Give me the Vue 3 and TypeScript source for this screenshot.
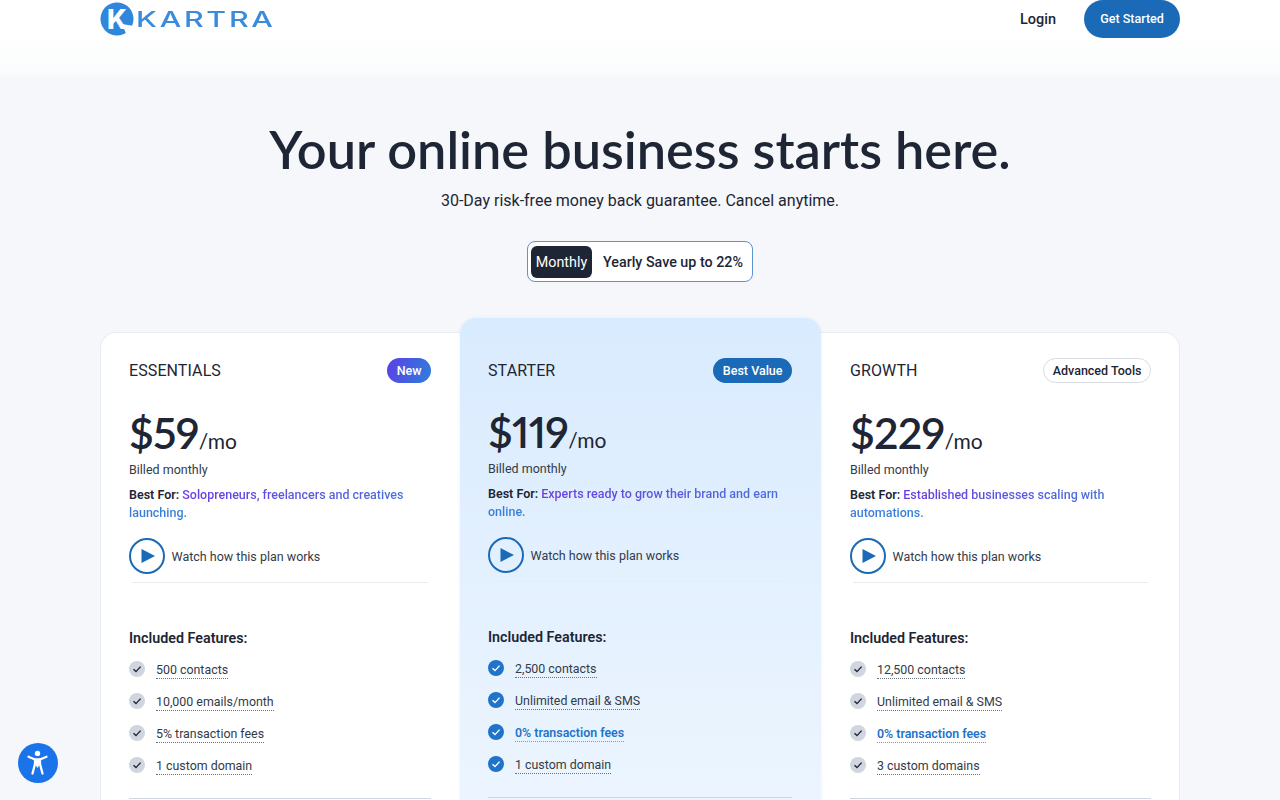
<script setup lang="ts">
interface Feature {
  label: string
  highlight?: boolean
}

interface Plan {
  name: string
  badge: string
  badgeClass: string
  price: string
  bestFor: [string, string]
  featured?: boolean
  features: Feature[]
}

const plans: Plan[] = [
  {
    name: 'ESSENTIALS',
    badge: 'New',
    badgeClass: 'badge-new',
    price: '$59',
    bestFor: ['Solopreneurs, freelancers and creatives', 'launching.'],
    features: [
      { label: '500 contacts' },
      { label: '10,000 emails/month' },
      { label: '5% transaction fees' },
      { label: '1 custom domain' }
    ]
  },
  {
    name: 'STARTER',
    badge: 'Best Value',
    badgeClass: 'badge-best',
    price: '$119',
    bestFor: ['Experts ready to grow their brand and earn', 'online.'],
    featured: true,
    features: [
      { label: '2,500 contacts' },
      { label: 'Unlimited email & SMS' },
      { label: '0% transaction fees', highlight: true },
      { label: '1 custom domain' }
    ]
  },
  {
    name: 'GROWTH',
    badge: 'Advanced Tools',
    badgeClass: 'badge-tools',
    price: '$229',
    bestFor: ['Established businesses scaling with', 'automations.'],
    features: [
      { label: '12,500 contacts' },
      { label: 'Unlimited email & SMS' },
      { label: '0% transaction fees', highlight: true },
      { label: '3 custom domains' }
    ]
  }
]
</script>

<template>
  <div class="page">
    <header class="header">
      <div class="header-inner">
        <div class="logo">
          <svg class="logo-mark" width="34" height="34" viewBox="0 0 34 34">
            <circle cx="17" cy="17" r="16.5" fill="#2f86dc" />
            <text x="7" y="27" font-family="Inter, sans-serif" font-weight="800" font-size="27" fill="#fff">K</text>
            <polygon points="22,22 34,24 30,34 27,34" fill="#fff" />
          </svg>
          <span class="logo-text">KARTRA</span>
        </div>
        <nav class="nav">
          <a class="login">Login</a>
          <a class="get-started">Get Started</a>
        </nav>
      </div>
    </header>

    <section class="hero">
      <h1>Your online business starts here.</h1>
      <p class="sub">30-Day risk-free money back guarantee. Cancel anytime.</p>
      <div class="toggle">
        <span class="toggle-on">Monthly</span>
        <span class="toggle-off">Yearly Save up to 22%</span>
      </div>
    </section>

    <section class="plans">
      <article v-for="plan in plans" :key="plan.name" class="card" :class="{ featured: plan.featured }">
        <div class="card-top">
          <h2>{{ plan.name }}</h2>
          <span class="badge" :class="plan.badgeClass">{{ plan.badge }}</span>
        </div>
        <div class="price">
          <span class="amount">{{ plan.price }}</span><span class="per">/mo</span>
        </div>
        <p class="billed">Billed monthly</p>
        <p class="best-for">
          <strong>Best For: </strong><span class="grad line-one">{{ plan.bestFor[0] }}</span><br />
          <span class="grad line-two">{{ plan.bestFor[1] }}</span>
        </p>
        <div class="watch">
          <span class="play">
            <svg width="16" height="16" viewBox="0 0 16 16"><polygon points="1.5,1 15,8 1.5,15" fill="#1b6ab8" /></svg>
          </span>
          <span>Watch how this plan works</span>
        </div>
        <div class="divider"></div>
        <h3>Included Features:</h3>
        <ul class="features">
          <li v-for="f in plan.features" :key="f.label">
            <span class="check">
              <svg width="10" height="10" viewBox="0 0 10 10">
                <path d="M1.5 5.3 L4 7.6 L8.6 2.6" fill="none" stroke="currentColor" stroke-width="1.4" />
              </svg>
            </span>
            <span class="feature-label" :class="{ hl: f.highlight }">{{ f.label }}</span>
          </li>
        </ul>
        <div class="rule"></div>
      </article>
    </section>

    <button class="a11y" aria-label="Accessibility">
      <svg width="26" height="26" viewBox="0 0 26 26">
        <circle cx="12.5" cy="3.4" r="2.7" fill="#fff" />
        <path d="M3.5 6.8 L10 9.5 H15 L21.5 6.8 M10 9.5 V14 L7.5 23.5 M15 9.5 V14 L17.5 23.5" fill="none" stroke="#fff" stroke-width="2.3" stroke-linecap="round" stroke-linejoin="round" />
        <path d="M10 9.5 H15 V14 L12.5 18 L10 14 Z" fill="#fff" />
      </svg>
    </button>
  </div>
</template>

<style scoped>
.page {
  height: 800px;
  overflow: hidden;
  background: #f5f7fa;
  color: #1e2535;
  font-family: Roboto, "Liberation Sans", sans-serif;
}

.header {
  height: 80px;
  background: linear-gradient(#fff 40%, #fbfcfd 88%, #f5f7fa 100%);
}

.header-inner {
  width: 1080px;
  margin: 0 auto;
  display: flex;
  justify-content: space-between;
  align-items: flex-start;
}

.logo {
  display: flex;
  align-items: center;
  gap: 2px;
  margin-top: 2px;
}

.logo-text {
  display: inline-block;
  font-family: Inter, sans-serif;
  font-size: 22px;
  font-weight: 500;
  letter-spacing: 2px;
  color: #3a8bdc;
  line-height: 34px;
  transform: scaleX(1.38);
  transform-origin: left center;
}

.nav {
  display: flex;
  align-items: center;
  gap: 28px;
}

.login {
  font-size: 14.5px;
  font-weight: 500;
}

.get-started {
  width: 96px;
  height: 38px;
  padding-bottom: 1px;
  box-sizing: border-box;
  display: flex;
  align-items: center;
  justify-content: center;
  border-radius: 19px;
  background: #1b6ab8;
  color: #fff;
  font-size: 12.5px;
  font-weight: 500;
}

.hero {
  text-align: center;
  padding-top: 36px;
}

h1 {
  margin: 0;
  font-family: Lato, sans-serif;
  font-size: 52.3px;
  line-height: 66px;
  font-weight: 600;
}

.sub {
  margin: 7px 0 0;
  font-size: 16px;
  line-height: 24px;
}

.toggle {
  width: 226px;
  height: 41px;
  box-sizing: border-box;
  margin: 28px auto 0;
  padding: 3px;
  display: flex;
  align-items: center;
  background: #fff;
  border: 1px solid #5b93d6;
  border-radius: 8px;
  font-size: 14.3px;
  font-weight: 500;
}

.toggle-on {
  width: 61px;
  height: 32px;
  display: flex;
  align-items: center;
  justify-content: center;
  background: #1e2535;
  color: #fff;
  border-radius: 6px;
  font-weight: 400;
}

.toggle-off {
  margin-left: 11px;
  white-space: nowrap;
}

.plans {
  width: 1080px;
  margin: 50px auto 0;
  display: grid;
  grid-template-columns: 360px 361px 359px;
  align-items: start;
}

.card {
  box-sizing: border-box;
  height: 520px;
  padding: 25px 29px 0 28px;
  background: #fff;
  border: 1px solid #e8ebef;
  border-radius: 16px 0 0 0;
}

.card:last-child {
  border-radius: 0 16px 0 0;
  border-left: 0;
  padding-left: 29px;
  padding-right: 28px;
}

.card:first-child {
  border-right: 0;
}

.card.featured {
  margin-top: -14px;
  height: 540px;
  padding-top: 40px;
  border: 0;
  border-radius: 16px 16px 0 0;
  background: linear-gradient(#d9ebfe, #eef6ff);
  box-shadow: 0 0 3px rgba(60, 110, 170, 0.1);
  position: relative;
  padding-left: 28px;
  padding-right: 29px;
}

.card-top {
  display: flex;
  justify-content: space-between;
  align-items: center;
}

h2 {
  margin: 0;
  font-size: 16px;
  font-weight: 400;
  letter-spacing: 0.1px;
}

.badge {
  height: 25px;
  display: flex;
  align-items: center;
  padding: 0 9.5px;
  box-sizing: border-box;
  border-radius: 13px;
  font-size: 12.5px;
  font-weight: 500;
}

.badge-new {
  color: #fff;
  background: linear-gradient(110deg, #5b3fe4, #2f7fdc);
}

.badge-best {
  color: #fff;
  background: #1b6ab8;
}

.badge-tools {
  padding: 0 8.5px;
  background: #fff;
  border: 1px solid #d8dce2;
}

.price {
  margin-top: 25px;
  height: 47px;
  font-family: Lato, sans-serif;
  font-variant-numeric: proportional-nums;
  display: flex;
  align-items: baseline;
}

.featured .price {
  margin-top: 24px;
}

.amount {
  font-size: 43px;
  line-height: 50px;
  font-weight: 600;
  letter-spacing: -0.7px;
}

.per {
  font-size: 21px;
  font-weight: 400;
}

.billed {
  margin: 6px 0 0;
  font-size: 12.5px;
  line-height: 18px;
  color: #333b48;
}

.best-for {
  margin: 7px 0 0;
  font-size: 12.5px;
  line-height: 18px;
}

.best-for strong {
  font-weight: 600;
}

.grad {
  -webkit-background-clip: text;
  background-clip: text;
  color: transparent;
  font-weight: 500;
}

.line-one {
  background-image: linear-gradient(90deg, #6a3be2, #4a6fdc);
}

.line-two {
  background-image: linear-gradient(90deg, #3f7bd9, #2f80d8);
}

.watch {
  margin-top: 16px;
  height: 36px;
  display: flex;
  align-items: center;
  gap: 6.5px;
  font-size: 12.5px;
  color: #333b48;
}

.divider {
  margin: 8px 3px 0;
  height: 1px;
  background: #e8ebef;
}

.featured .divider {
  background: #e0ecf9;
}

.play {
  width: 36px;
  height: 36px;
  box-sizing: border-box;
  border: 2px solid #1b6ab8;
  border-radius: 50%;
  display: flex;
  align-items: center;
  justify-content: center;
  padding-left: 2px;
}

h3 {
  margin: 46px 0 0;
  font-size: 14.3px;
  line-height: 18px;
  font-weight: 600;
}

.features {
  list-style: none;
  margin: 7px 0 0;
  padding: 0;
}

.features li {
  height: 32px;
  display: flex;
  align-items: center;
  gap: 11px;
  font-size: 12.4px;
  color: #333b48;
}

.check {
  width: 16px;
  height: 16px;
  flex: none;
  border-radius: 50%;
  background: #d0d5df;
  color: #1e2535;
  display: flex;
  align-items: center;
  justify-content: center;
  margin-top: -2px;
}

.featured .check {
  background: #1f74c9;
  color: #fff;
}

.feature-label {
  line-height: 17px;
  border-bottom: 1px dotted #6b7280;
}

.feature-label.hl {
  color: #1f74c9;
  font-weight: 600;
  border-bottom-color: #6a9ed4;
}

.rule {
  margin-top: 16px;
  height: 1px;
  background: #cfd6dd;
}

.a11y {
  position: fixed;
  left: 18px;
  top: 743px;
  width: 40px;
  height: 40px;
  padding: 0;
  border: 0;
  border-radius: 50%;
  background: #1a73e8;
  display: flex;
  align-items: center;
  justify-content: center;
}
</style>
